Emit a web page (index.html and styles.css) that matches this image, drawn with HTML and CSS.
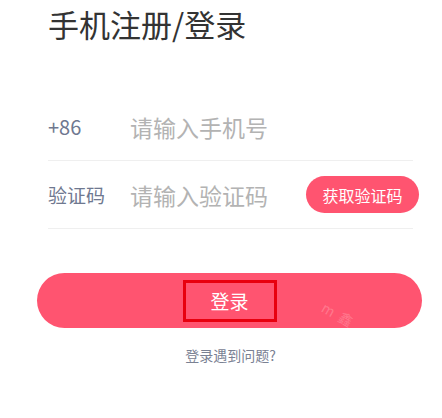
FILE: index.html
```html
<!DOCTYPE html>
<html lang="zh-CN">
<head>
<meta charset="utf-8">
<title>手机注册/登录</title>
<link rel="stylesheet" href="styles.css">
</head>
<body>
<main class="page">
  <h1 class="title">手机注册/登录</h1>
  <form class="form">
    <div class="row">
      <span class="label label-code">+86</span>
      <input class="field" type="tel" placeholder="请输入手机号">
    </div>
    <div class="row">
      <span class="label">验证码</span>
      <input class="field" type="text" placeholder="请输入验证码">
      <button type="button" class="code-btn">获取验证码</button>
    </div>
  </form>
  <div class="submit-wrap">
    <button type="button" class="submit">
      <span class="submit-text">登录</span>
      <span class="watermark">m&nbsp;&nbsp;鑫</span>
    </button>
  </div>
  <p class="help">登录遇到问题?</p>
</main>
</body>
</html>
```

FILE: styles.css
```css
* { box-sizing: border-box; }
html, body { margin: 0; padding: 0; background: #fff; }
body {
  font-family: "Noto Sans CJK SC", "Noto Sans", sans-serif;
  width: 442px;
  height: 418px;
  overflow: hidden;
}
.page {
  padding: 6px 29px 0 48px;
}
.title {
  margin: 0;
  font-size: 31px;
  line-height: 35px;
  font-weight: 400;
  color: #333333;
}
.form {
  margin-top: 52px;
}
.row {
  display: flex;
  align-items: center;
  height: 68px;
  border-bottom: 1px solid #efefef;
}
.label {
  width: 82px;
  flex: none;
  font-size: 19px;
  color: #6f7890;
  line-height: 1;
}
.label-code { font-size: 20px; }
.field {
  flex: 1;
  min-width: 0;
  border: 0;
  outline: 0;
  padding: 0;
  background: transparent;
  font-family: inherit;
  font-size: 23px;
  color: #333;
}
.field::placeholder { color: #b3b3b3; }
.code-btn {
  flex: none;
  width: 113px;
  height: 37px;
  margin-right: -6px;
  border: 0;
  border-radius: 19px;
  background: #ff5470;
  color: #fff;
  font-family: inherit;
  font-size: 16px;
  padding: 0;
}
.submit-wrap {
  margin: 44px -9px 0 -11px;
}
.submit {
  position: relative;
  display: flex;
  align-items: center;
  justify-content: center;
  width: 100%;
  height: 55px;
  border: 0;
  border-radius: 28px;
  background: #ff5470;
  padding: 0;
  font-family: inherit;
}
.submit-text {
  display: flex;
  align-items: center;
  justify-content: center;
  width: 94px;
  height: 42px;
  border: 3px solid #e8000f;
  color: #fff;
  font-size: 19px;
}
.watermark {
  position: absolute;
  left: 284px;
  top: 34px;
  color: rgba(255, 255, 255, 0.22);
  font-size: 14px;
  line-height: 1;
  transform: rotate(30deg);
  white-space: nowrap;
}
.help {
  margin: 17px 0 0;
  text-align: center;
  font-size: 14px;
  color: #7a8193;
}
```
